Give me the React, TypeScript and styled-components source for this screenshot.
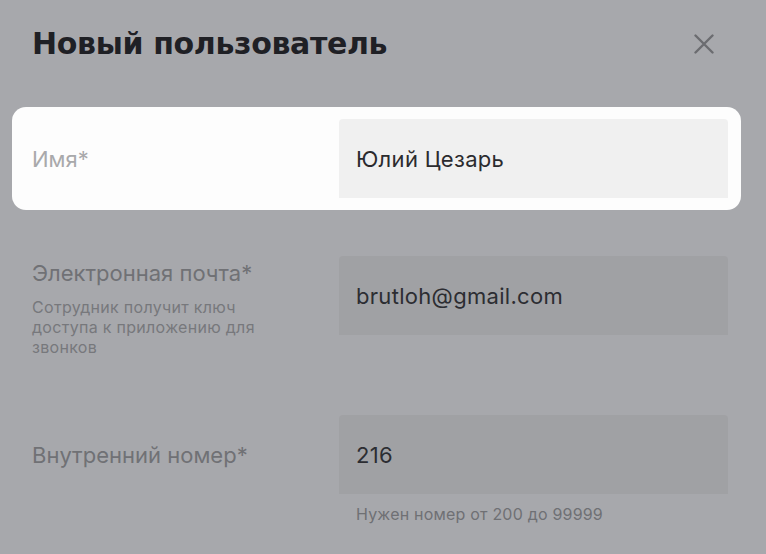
import React from "react";
import styled, { createGlobalStyle } from "styled-components";

const Global = createGlobalStyle`
  html, body { margin: 0; padding: 0; background: #a7a8ac; }
  body { font-family: Inter, "Open Sans", sans-serif; }
`;

const Page = styled.div`
  width: 766px;
  height: 554px;
  box-sizing: border-box;
  padding: 0 25px 0 12px;
  background: #a7a8ac;
  overflow: hidden;
`;

const Header = styled.div`
  display: flex;
  align-items: center;
  justify-content: space-between;
  padding: 24px 27px 0 20px;
  height: 40px;
`;

const Title = styled.h1`
  margin: 0;
  font-family: "DejaVu Sans", Inter, sans-serif;
  font-weight: 700;
  font-size: 30px;
  line-height: 40px;
  color: #1f2025;
  letter-spacing: -0.35px;
`;

const Close = styled.button`
  border: 0;
  background: none;
  padding: 0;
  width: 20px;
  height: 20px;
  display: flex;
  cursor: pointer;
`;

const List = styled.div`
  display: flex;
  flex-direction: column;
  gap: 34px;
  margin-top: 43px;
`;

const Row = styled.div<{ $active?: boolean }>`
  display: grid;
  grid-template-columns: 307px 389px;
  align-items: start;
  padding: 12px 13px 12px 20px;
  border-radius: 14px;
  background: ${(p) => (p.$active ? "#fdfdfd" : "transparent")};
`;

const LabelCol = styled.div<{ $centered?: boolean }>`
  display: flex;
  flex-direction: column;
  justify-content: ${(p) => (p.$centered ? "center" : "flex-start")};
  height: ${(p) => (p.$centered ? "79px" : "auto")};
  padding-top: ${(p) => (p.$centered ? 0 : 4)}px;
`;

const Label = styled.label<{ $active?: boolean }>`
  font-size: 22px;
  line-height: 26px;
  color: ${(p) => (p.$active ? "#a9a9ab" : "#707175")};
`;

const Help = styled.div`
  margin-top: 11px;
  width: 250px;
  font-size: 16px;
  line-height: 20px;
  letter-spacing: 0.3px;
  color: #77787c;
`;

const FieldCol = styled.div`
  display: flex;
  flex-direction: column;
`;

const Input = styled.div<{ $active?: boolean }>`
  height: 79px;
  box-sizing: border-box;
  display: flex;
  align-items: center;
  padding: 0 17px;
  border-radius: 4px 4px 0 0;
  background: ${(p) => (p.$active ? "#f0f0f0" : "#a0a1a4")};
  font-size: 22px;
  letter-spacing: 0.3px;
  color: ${(p) => (p.$active ? "#2b2b2e" : "#2c2d32")};
`;

const FieldNote = styled.div`
  margin-top: 10px;
  padding-left: 17px;
  font-size: 16px;
  line-height: 20px;
  letter-spacing: 0.2px;
  color: #6f7074;
`;

export default function App() {
  return (
    <Page>
      <Global />
      <Header>
        <Title>Новый пользователь</Title>
        <Close aria-label="Закрыть">
          <svg width="20" height="20" viewBox="0 0 20 20">
            <path d="M1.5 1.5 L18.5 18.5 M18.5 1.5 L1.5 18.5" stroke="#6b6c70" strokeWidth="2.4" strokeLinecap="round" />
          </svg>
        </Close>
      </Header>
      <List>
        <Row $active>
          <LabelCol $centered>
            <Label $active>Имя*</Label>
          </LabelCol>
          <FieldCol>
            <Input $active>Юлий Цезарь</Input>
          </FieldCol>
        </Row>
        <Row>
          <LabelCol>
            <Label>Электронная почта*</Label>
            <Help>Сотрудник получит ключ доступа к приложению для звонков</Help>
          </LabelCol>
          <FieldCol>
            <Input>brutloh@gmail.com</Input>
          </FieldCol>
        </Row>
        <Row>
          <LabelCol $centered>
            <Label>Внутренний номер*</Label>
          </LabelCol>
          <FieldCol>
            <Input>216</Input>
            <FieldNote>Нужен номер от 200 до 99999</FieldNote>
          </FieldCol>
        </Row>
      </List>
    </Page>
  );
}
